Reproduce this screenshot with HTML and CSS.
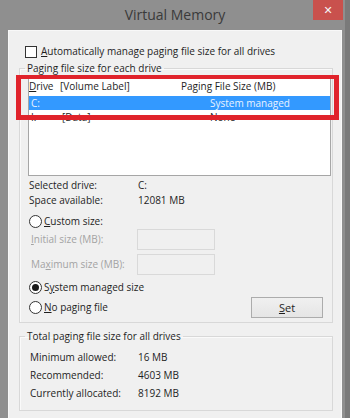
FILE: index.html
```html
<!DOCTYPE html>
<html>
<head>
<meta charset="utf-8">
<link rel="stylesheet" href="styles.css">
</head>
<body>
<div class="window">
  <div class="titlebar">
    <span class="spacer"></span>
    <span class="title">Virtual Memory</span>
    <span class="close">✕</span>
  </div>
  <div class="client">
    <label class="check-row"><span class="checkbox"></span><span><u>A</u>utomatically manage paging file size for all drives</span></label>

    <fieldset class="group group-drives">
      <legend><span>Paging file size for each drive</span></legend>
      <div class="list-wrap">
        <div class="list">
          <div class="list-head"><span><u>D</u>rive</span><span>[Volume Label]</span><span>Paging File Size (MB)</span></div>
          <div class="list-row selected"><span>C:</span><span></span><span>System managed</span></div>
          <div class="list-row"><span>I:</span><span>[Data]</span><span>None</span></div>
        </div>
        <div class="highlight"></div>
      </div>

      <div class="info">
        <span>Selected drive:</span><span>C:</span>
        <span>Space available:</span><span>12081 MB</span>
      </div>

      <div class="radio-row custom"><span class="radio"></span><span><u>C</u>ustom size:</span></div>
      <div class="field-row first"><span class="disabled"><u>I</u>nitial size (MB):</span><span class="textbox"></span></div>
      <div class="field-row"><span class="disabled">Ma<u>x</u>imum size (MB):</span><span class="textbox"></span></div>

      <div class="bottom-grid">
        <div class="radio-row"><span class="radio checked"></span><span>S<u>y</u>stem managed size</span></div>
        <div class="radio-row second"><span class="radio"></span><span><u>N</u>o paging file</span></div>
        <button class="set-btn"><u>S</u>et</button>
      </div>
    </fieldset>

    <fieldset class="group group-total">
      <legend><span>Total paging file size for all drives</span></legend>
      <div class="totals">
        <span>Minimum allowed:</span><span>16 MB</span>
        <span>Recommended:</span><span>4603 MB</span>
        <span>Currently allocated:</span><span>8192 MB</span>
      </div>
    </fieldset>
  </div>
</div>
</body>
</html>
```

FILE: styles.css
```css
* { box-sizing: border-box; }
html, body { margin: 0; padding: 0; }
body {
  width: 350px;
  height: 418px;
  overflow: hidden;
  font-family: "Open Sans", "Liberation Sans", sans-serif;
  font-size: 10px;
  color: #1e1e1e;
}
u { text-decoration: underline; text-underline-offset: 1px; text-decoration-thickness: 1px; }

.window {
  width: 350px;
  height: 418px;
  background: linear-gradient(to right, #8f8f8f 0, #8f8f8f 345px, #7a7a7a 345px);
  padding: 0 8px;
  display: flex;
  flex-direction: column;
}

.titlebar {
  height: 30px;
  display: grid;
  grid-template-columns: 1fr auto 1fr;
  align-items: start;
}
.title {
  font-size: 14px;
  color: #3a3a3a;
  line-height: 30px;
}
.close {
  justify-self: end;
  width: 30px;
  height: 20px;
  margin-right: -1px;
  background: #c9514d;
  color: #f4f4f4;
  font-size: 11px;
  font-weight: bold;
  display: flex;
  align-items: center;
  justify-content: center;
  font-family: "DejaVu Sans", sans-serif;
}

.client {
  flex: 1;
  background: #f0f0f0;
  border-top: 1px solid #f8f8f8;
  border-left: 1px solid #f8f8f8;
  border-right: 1px solid #f8f8f8;
  padding: 13px 8px 0 10px;
}

.check-row {
  display: flex;
  align-items: center;
  height: 15px;
  margin-left: 6px;
  gap: 4px;
  line-height: 15px;
}
.checkbox {
  width: 12px;
  height: 12px;
  border: 1px solid #333;
  background: #fff;
}

.group {
  margin: 2px 0 0 0;
  padding: 2px 1px 8px 8px;
  border: 1px solid #d8d8d8;
  box-shadow: inset 1px 1px 0 #fafafa;
  min-width: 0;
}
.group legend {
  padding: 0 2px;
  margin-left: -3px;
  line-height: 15px;
}

.list-wrap { position: relative; }
.list {
  height: 98px;
  background: #fff;
  border: 1px solid #a6a6a6;
  line-height: 15px;
}
.list-head {
  display: grid;
  grid-template-columns: 31px 121px 1fr;
  padding-left: 0;
}
.list-row {
  display: grid;
  grid-template-columns: 31px 148px 1fr;
  padding-left: 2px;
  height: 14px;
  line-height: 14px;
}
.list-row.selected {
  margin-top: 2px;
  background: #3399ff;
  color: #e9f3ff;
}
.highlight {
  position: absolute;
  left: -12px;
  top: -3px;
  width: 323px;
  height: 45px;
  border: 5px solid #e0232b;
  border-top-width: 4px;
}

.info {
  display: grid;
  grid-template-columns: 109px 1fr;
  line-height: 15px;
  margin-top: 2px;
  padding-left: 1px;
}

.radio-row {
  display: flex;
  align-items: center;
  gap: 2px;
  height: 14px;
  padding-left: 1px;
  line-height: 15px;
}
.radio-row.custom { margin-top: 6px; }
.radio {
  width: 13px;
  height: 13px;
  border: 1px solid #333;
  border-radius: 50%;
  background: #fff;
  display: flex;
  align-items: center;
  justify-content: center;
  flex: none;
}
.radio.checked::after {
  content: "";
  width: 7px;
  height: 7px;
  border-radius: 50%;
  background: #1a1a1a;
}

.field-row {
  display: grid;
  grid-template-columns: 109px 75px;
  align-items: center;
  height: 22px;
  padding-left: 3px;
}
.field-row + .field-row { margin-top: 3px; }
.disabled { color: #a3a3a3; }
.textbox {
  height: 21px;
  border: 1px solid #d9d9d9;
  background: #f0f0f0;
  margin-left: -3px;
}

.bottom-grid {
  display: grid;
  grid-template-columns: 1fr auto;
  grid-template-rows: 14px 14px;
  row-gap: 6px;
  margin-top: 5px;
}
.bottom-grid .radio-row { grid-column: 1; }
.set-btn {
  grid-column: 2;
  grid-row: 2;
  align-self: center;
  width: 72px;
  height: 21px;
  margin-right: 8px;
  font: inherit;
  font-size: 11px;
  color: #1e1e1e;
  border: 1px solid #acacac;
  background: linear-gradient(#f0f0f0, #e5e5e5);
  padding: 0;
}

.group-total {
  margin-top: 6px;
  padding: 4px 1px 8px 8px;
}
.totals {
  display: grid;
  grid-template-columns: 108px 1fr;
  line-height: 18px;
  padding-left: 2px;
}
```
